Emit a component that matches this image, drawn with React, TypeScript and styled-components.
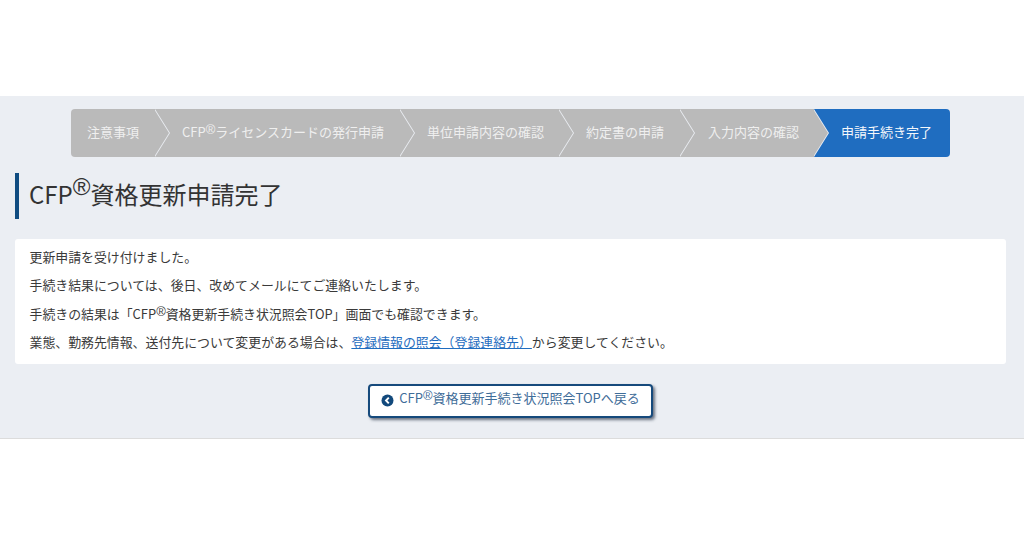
import React from "react";
import styled, { createGlobalStyle } from "styled-components";

const Global = createGlobalStyle`
  html, body { margin: 0; padding: 0; background: #fff; }
  body { font-family: "Noto Sans CJK JP", "Liberation Sans", sans-serif; overflow: hidden; }
`;

const Page = styled.div`
  width: 1024px;
  height: 538px;
  padding-top: 96px;
  box-sizing: border-box;
  background: #fff;
`;

const Band = styled.main`
  height: 343px;
  box-sizing: border-box;
  padding: 13px 18px 0 15px;
  background: #ebeef3;
  border-bottom: 1px solid #dcdcdc;
  display: flex;
  flex-direction: column;
`;

const Stepper = styled.ol`
  list-style: none;
  margin: 0 0 0 56px;
  padding: 0;
  width: 879px;
  height: 48px;
  display: flex;
  border-radius: 4px;
  overflow: hidden;
`;

const Step = styled.li<{ $w: number; $pad: number; $active?: boolean; $last?: boolean }>`
  position: relative;
  width: ${(p) => p.$w}px;
  box-sizing: border-box;
  padding-left: ${(p) => p.$pad}px;
  padding-bottom: 4px;
  display: flex;
  align-items: center;
  white-space: nowrap;
  font-size: 13px;
  background: ${(p) => (p.$active ? "#1f6dc0" : "#bababa")};
  color: ${(p) => (p.$active ? "#f4f7fb" : "#efefef")};

  &::before,
  &::after {
    content: ${(p) => (p.$last ? "none" : '""')};
    position: absolute;
    top: 0;
    width: 15px;
    height: 48px;
    clip-path: polygon(0 0, 100% 50%, 0 100%);
  }
  &::before {
    right: -15px;
    background: #ebeef3;
    z-index: 1;
  }
  &::after {
    right: -14px;
    background: #bababa;
    z-index: 2;
  }
`;

const Mark = styled.span`
  font-family: "Liberation Sans", sans-serif;
  font-size: 13px;
  line-height: 0;
  position: relative;
  top: -3px;
`;

const TitleRow = styled.h1`
  margin: 16px 0 20px;
  height: 46px;
  border-left: 4px solid #0f4c81;
  padding: 0 0 6px 10px;
  box-sizing: border-box;
  display: flex;
  align-items: center;
  font-size: 24px;
  font-weight: 400;
  color: #333;
  white-space: nowrap;
`;

const TitleMark = styled.span`
  font-family: "Liberation Sans", sans-serif;
  font-size: 24px;
  line-height: 0;
  position: relative;
  top: -6px;
`;

const Notice = styled.section`
  height: 125px;
  box-sizing: border-box;
  padding: 4px 15px 0 14.5px;
  background: #fff;
  border-radius: 3px;
  display: flex;
  flex-direction: column;
`;

const Line = styled.p`
  margin: 0;
  height: 28.4px;
  line-height: 27.4px;
  font-size: 12.9px;
  color: #3a3a3a;
  white-space: nowrap;
`;

const InfoLink = styled.a`
  color: #1f6dc0;
  text-decoration: underline;
`;

const Actions = styled.div`
  display: flex;
  justify-content: center;
  margin-top: 20px;
`;

const BackButton = styled.a`
  width: 285px;
  height: 34px;
  box-sizing: border-box;
  padding-bottom: 7px;
  display: flex;
  align-items: center;
  justify-content: center;
  gap: 5px;
  background: #fff;
  border: 2px solid #164a7c;
  border-radius: 4px;
  box-shadow: 2px 2px 3px rgba(40, 50, 70, 0.65);
  color: #3f6d99;
  font-size: 13px;
  white-space: nowrap;
  text-decoration: none;
`;

const BackIcon = styled.svg`
  position: relative;
  top: 3px;
  flex: none;
`;

const steps = [
  { w: 84, pad: 16, label: <>注意事項</> },
  { w: 245, pad: 27, label: <>CFP<Mark>®</Mark>ライセンスカードの発行申請</> },
  { w: 159, pad: 27, label: <>単位申請内容の確認</> },
  { w: 121, pad: 27, label: <>約定書の申請</> },
  { w: 134, pad: 28, label: <>入力内容の確認</> },
  { w: 136, pad: 27, label: <>申請手続き完了</>, active: true },
];

export default function App() {
  return (
    <Page>
      <Global />
      <Band>
        <Stepper>
          {steps.map((s, i) => (
            <Step key={i} $w={s.w} $pad={s.pad} $active={s.active} $last={s.active}>
              <span>{s.label}</span>
            </Step>
          ))}
        </Stepper>
        <TitleRow>
          CFP<TitleMark>®</TitleMark>資格更新申請完了
        </TitleRow>
        <Notice>
          <Line>更新申請を受け付けました。</Line>
          <Line>手続き結果については、後日、改めてメールにてご連絡いたします。</Line>
          <Line>手続きの結果は「CFP<Mark>®</Mark>資格更新手続き状況照会TOP」画面でも確認できます。</Line>
          <Line>
            業態、勤務先情報、送付先について変更がある場合は、<InfoLink href="#">登録情報の照会（登録連絡先）</InfoLink>から変更してください。
          </Line>
        </Notice>
        <Actions>
          <BackButton href="#">
            <BackIcon width="13" height="13" viewBox="0 0 13 13" aria-hidden="true">
              <circle cx="6.5" cy="6.5" r="6" fill="#12497c" />
              <path d="M7.8 3.6 5 6.5l2.8 2.9" fill="none" stroke="#fff" strokeWidth="1.9" />
            </BackIcon>
            <span>CFP<Mark>®</Mark>資格更新手続き状況照会TOPへ戻る</span>
          </BackButton>
        </Actions>
      </Band>
    </Page>
  );
}
